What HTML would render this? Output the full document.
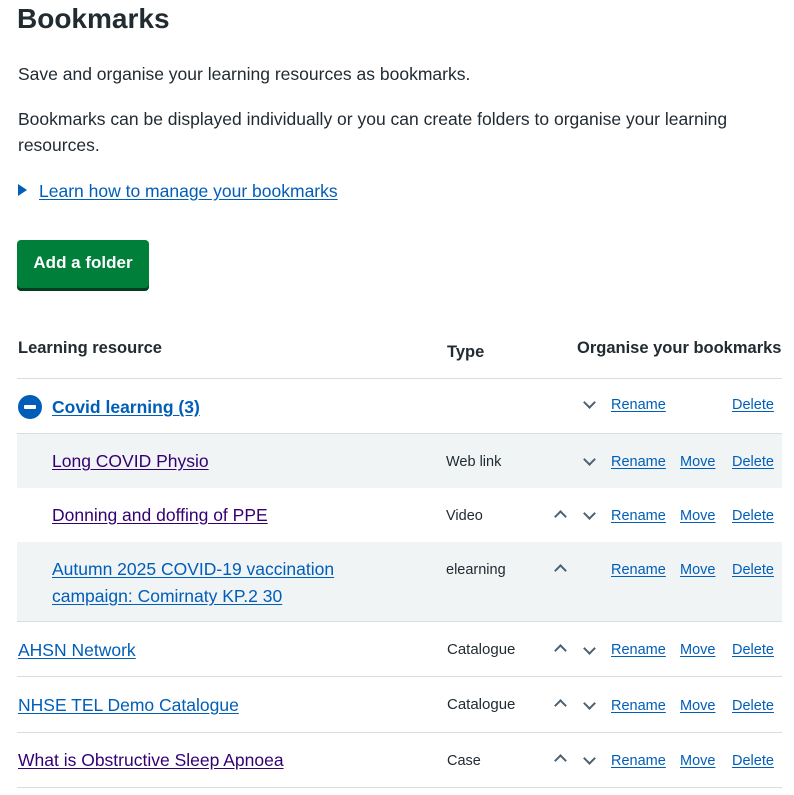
<!DOCTYPE html>
<html><head><meta charset="utf-8"><style>
body{margin:0;width:794px;height:795px;background:#fff;font-family:"Liberation Sans",Arial,sans-serif;color:#212b32;position:relative;overflow:hidden}
.a{position:absolute;white-space:nowrap}
a{color:#005eb8;text-decoration:underline;text-underline-offset:2px}
a.v{color:#330072}
.t{font-size:17.5px;line-height:24px}
.s{font-size:14.5px;line-height:20px}
.line{position:absolute;left:17px;width:765px;height:1px;background:#d8dde0}
.g{position:absolute;left:17px;width:765px;background:#f0f4f5}
.ch{position:absolute;width:7px;height:7px;border-left:2px solid #4c6272;border-top:2px solid #4c6272}
</style></head><body>
<div class="a" style="left:17px;top:2px;font-size:28px;line-height:34px;font-weight:bold">Bookmarks</div>
<div class="a t" style="left:18px;top:62px">Save and organise your learning resources as bookmarks.</div>
<div class="a t" style="left:18px;top:106px;white-space:normal;width:760px;line-height:26px">Bookmarks can be displayed individually or you can create folders to organise your learning resources.</div>
<div class="a" style="left:18px;top:184px;width:0;height:0;border-left:9px solid #005eb8;border-top:6px solid transparent;border-bottom:6px solid transparent"></div>
<div class="a t" style="left:39px;top:179px"><a href="#">Learn how to manage your bookmarks</a></div>
<div class="a" style="left:17px;top:240px;width:132px;height:48px;background:#007f3b;border-radius:4px;box-shadow:0 3px 0 #00401e;color:#fff;font-weight:bold;font-size:17px;line-height:46px;text-align:center">Add a folder</div>

<div class="a" style="left:18px;top:336px;font-weight:bold;font-size:16.5px;line-height:24px">Learning resource</div>
<div class="a" style="left:447px;top:340px;font-weight:bold;font-size:16.5px;line-height:24px">Type</div>
<div class="a" style="left:577px;top:336px;font-weight:bold;font-size:16.5px;line-height:24px">Organise your bookmarks</div>
<div class="line" style="top:378px"></div>

<div class="g" style="top:434px;height:54px"></div>
<div class="g" style="top:542px;height:79px"></div>
<div class="line" style="top:433px"></div>
<div class="line" style="top:621px"></div>
<div class="line" style="top:676px"></div>
<div class="line" style="top:732px"></div>
<div class="line" style="top:787px"></div>

<div class="a" style="left:18px;top:395px;width:24px;height:24px;border-radius:50%;background:#005eb8"></div>
<div class="a" style="left:24px;top:405px;width:12px;height:4px;background:#fff;border-radius:1px"></div>
<div class="a t" style="left:52px;top:395px;font-weight:bold"><a href="#">Covid learning (3)</a></div>

<div class="a t" style="left:52px;top:449px"><a class="v" href="#">Long COVID Physio</a></div>
<div class="a t" style="left:52px;top:503px"><a class="v" href="#">Donning and doffing of PPE</a></div>
<div class="a t" style="left:52px;top:556px;line-height:27px"><a href="#">Autumn 2025 COVID-19 vaccination<br>campaign: Comirnaty KP.2 30</a></div>
<div class="a t" style="left:18px;top:638px"><a href="#">AHSN Network</a></div>
<div class="a t" style="left:18px;top:693px"><a href="#">NHSE TEL Demo Catalogue</a></div>
<div class="a t" style="left:18px;top:748px"><a class="v" href="#">What is Obstructive Sleep Apnoea</a></div>

<div class="a s" style="left:446px;top:452px">Web link</div>
<div class="a s" style="left:446px;top:506px">Video</div>
<div class="a s" style="left:446px;top:560px">elearning</div>
<div class="a s" style="left:447px;top:640px;font-size:15px">Catalogue</div>
<div class="a s" style="left:447px;top:695px;font-size:15px">Catalogue</div>
<div class="a s" style="left:447px;top:751px">Case</div>

<div class="ch" style="left:556px;top:512px;transform:rotate(45deg)"></div>
<div class="ch" style="left:556px;top:566px;transform:rotate(45deg)"></div>
<div class="ch" style="left:556px;top:646px;transform:rotate(45deg)"></div>
<div class="ch" style="left:556px;top:701px;transform:rotate(45deg)"></div>
<div class="ch" style="left:556px;top:756px;transform:rotate(45deg)"></div>
<div class="ch" style="left:585px;top:398px;transform:rotate(225deg)"></div>
<div class="ch" style="left:585px;top:455px;transform:rotate(225deg)"></div>
<div class="ch" style="left:585px;top:509px;transform:rotate(225deg)"></div>
<div class="ch" style="left:585px;top:644px;transform:rotate(225deg)"></div>
<div class="ch" style="left:585px;top:699px;transform:rotate(225deg)"></div>
<div class="ch" style="left:585px;top:754px;transform:rotate(225deg)"></div>

<div class="a s" style="left:611px;top:395px"><a href="#">Rename</a></div>
<div class="a s" style="left:732px;top:395px"><a href="#">Delete</a></div>
<div class="a s" style="left:611px;top:452px"><a href="#">Rename</a></div><div class="a s" style="left:680px;top:452px"><a href="#">Move</a></div><div class="a s" style="left:732px;top:452px"><a href="#">Delete</a></div>
<div class="a s" style="left:611px;top:506px"><a href="#">Rename</a></div><div class="a s" style="left:680px;top:506px"><a href="#">Move</a></div><div class="a s" style="left:732px;top:506px"><a href="#">Delete</a></div>
<div class="a s" style="left:611px;top:560px"><a href="#">Rename</a></div><div class="a s" style="left:680px;top:560px"><a href="#">Move</a></div><div class="a s" style="left:732px;top:560px"><a href="#">Delete</a></div>
<div class="a s" style="left:611px;top:640px"><a href="#">Rename</a></div><div class="a s" style="left:680px;top:640px"><a href="#">Move</a></div><div class="a s" style="left:732px;top:640px"><a href="#">Delete</a></div>
<div class="a s" style="left:611px;top:696px"><a href="#">Rename</a></div><div class="a s" style="left:680px;top:696px"><a href="#">Move</a></div><div class="a s" style="left:732px;top:696px"><a href="#">Delete</a></div>
<div class="a s" style="left:611px;top:751px"><a href="#">Rename</a></div><div class="a s" style="left:680px;top:751px"><a href="#">Move</a></div><div class="a s" style="left:732px;top:751px"><a href="#">Delete</a></div>
</body></html>
